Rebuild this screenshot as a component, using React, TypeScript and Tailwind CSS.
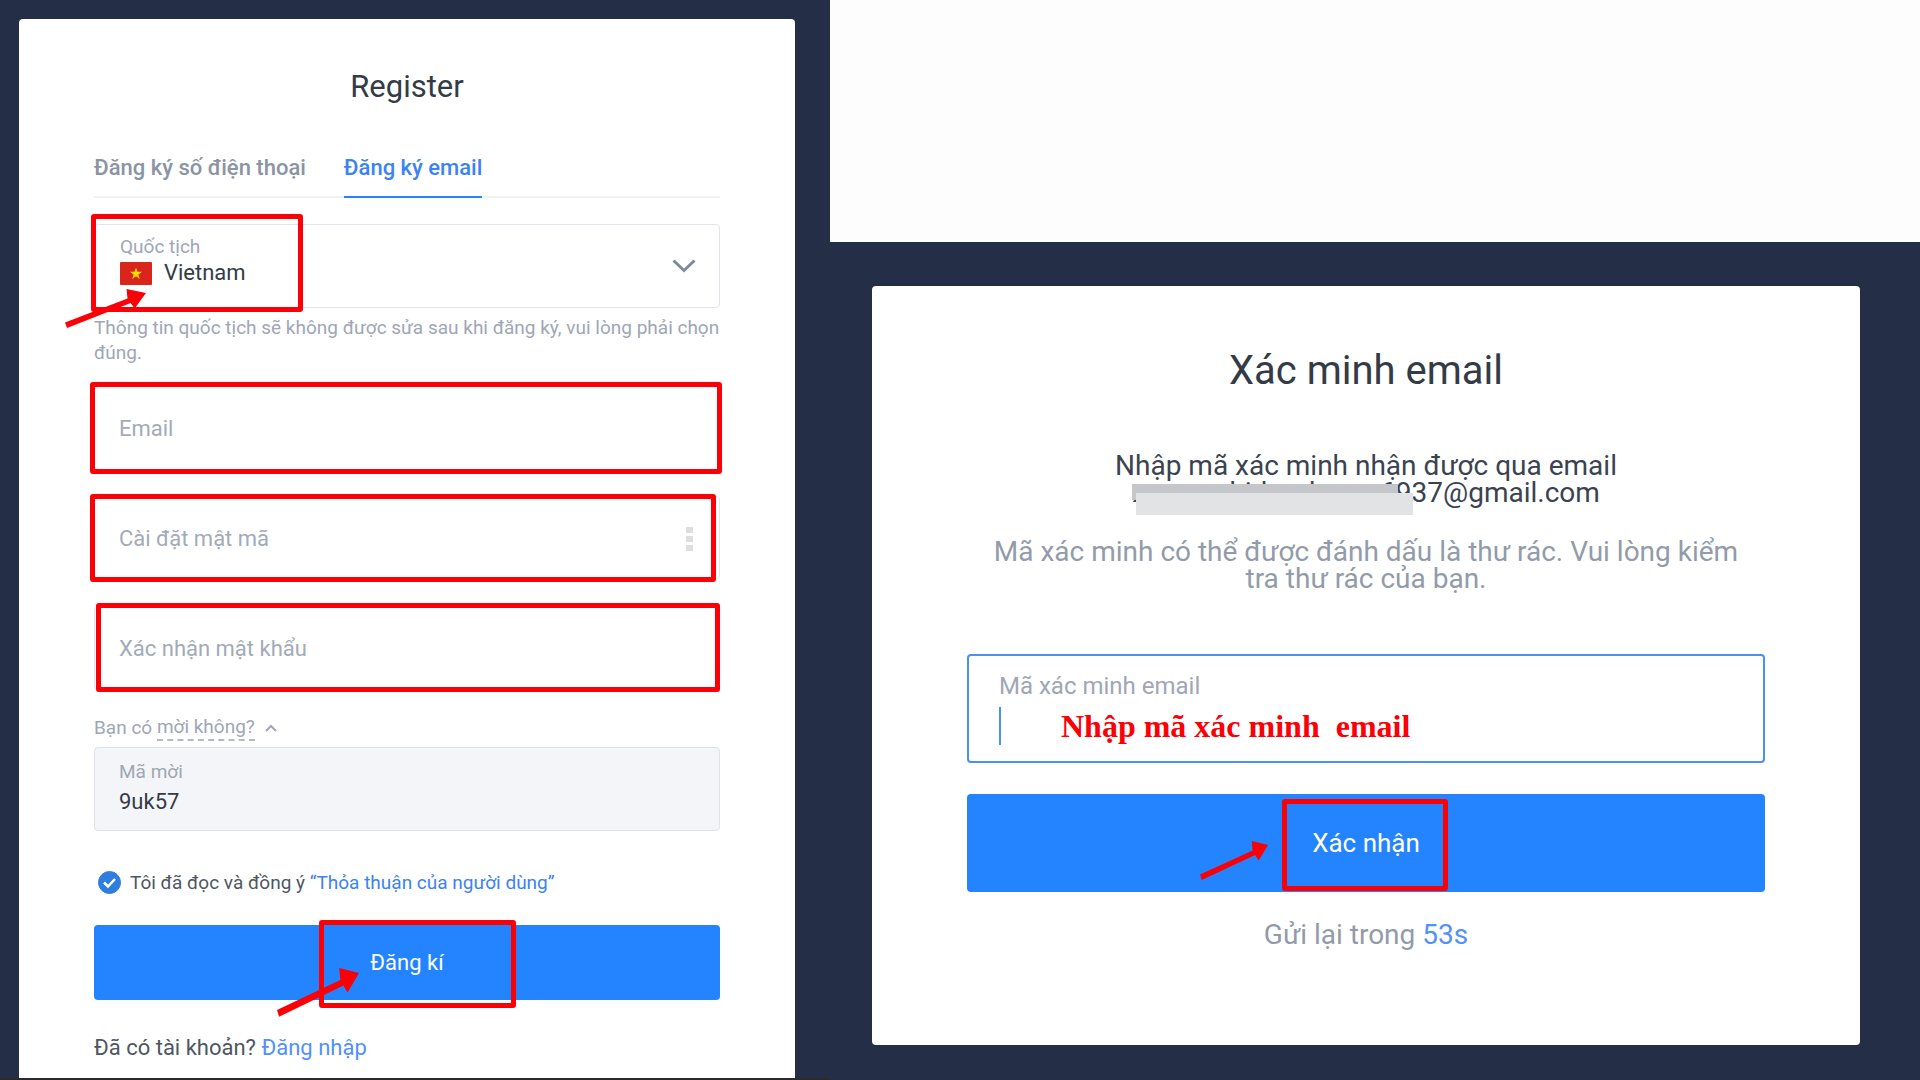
import { useState } from "react";

const noteText = "Thông tin quốc tịch sẽ không được sửa sau khi đăng ký, vui lòng phải chọn đúng.";

function Frame({ className }: { className: string }) {
    return <span aria-hidden="true" className={`pointer-events-none absolute rounded-[3px] border-5 border-[#fb0007] ${className}`} />;
}

function Arrow({ className }: { className: string }) {
    return (
        <svg aria-hidden="true" viewBox="0 0 80 40" preserveAspectRatio="none" className={`pointer-events-none absolute overflow-visible ${className}`}>
            <path d="M0 33.500 L61 9.500 L60 0 L79 4 L68 19.500 L64 14 L2 39 Z" fill="#fb0007" />
        </svg>
    );
}

function RegisterForm() {
    const [country, setCountry] = useState("Vietnam");
    const [email, setEmail] = useState("");
    const [password, setPassword] = useState("");
    const [confirm, setConfirm] = useState("");
    const [agree, setAgree] = useState(true);

    const inputStyle =
        "block h-[84px] w-full rounded border border-[#e1e4ea] bg-white px-6 text-[22px] text-[#333b47] outline-none placeholder:text-[#a3aab8]";

    return (
        <form onSubmit={(e) => e.preventDefault()} className="flex flex-1 flex-col rounded-t bg-white px-[75px] pt-12">
            <h1 className="text-center text-[31px] leading-10 text-[#333b47]">Register</h1>

            <div className="mt-[45px] flex gap-[38px] border-b-2 border-[#eff1f4] text-[22px] leading-8 font-medium">
                <button type="button" className="-mb-0.5 border-b-2 border-transparent pb-3 text-[#8a94a3]">Đăng ký số điện thoại</button>
                <button type="button" className="-mb-0.5 border-b-2 border-[#2483ff] pb-3 text-[#3b82f6]">Đăng ký email</button>
            </div>

            <div className="relative mt-[26px] flex h-[84px] items-center rounded border border-[#e1e4ea] px-[25px]">
                <div className="flex-1 pb-2.5">
                    <label htmlFor="country" className="block text-[19px] leading-6 text-[#a0a6b5]">Quốc tịch</label>
                    <div className="flex items-center">
                        <svg viewBox="0 0 32 23" className="h-[23px] w-8">
                            <rect width="32" height="23" rx="1" fill="#da251d" />
                            <path d="M16 5.500l1.500 4.300h4.500l-3.600 2.700 1.300 4.400-3.700-2.600-3.700 2.600 1.300-4.400-3.600-2.700h4.500z" fill="#ffdd00" />
                        </svg>
                        <select
                            id="country"
                            value={country}
                            onChange={(e) => setCountry(e.target.value)}
                            className="ml-3 flex-1 appearance-none bg-transparent text-[22px] leading-7 text-[#333b47] outline-none"
                        >
                            <option>Vietnam</option>
                        </select>
                    </div>
                </div>
                <svg viewBox="0 0 24 14" className="-mr-0.5 h-3.5 w-6" fill="none" stroke="#7f8b9b" strokeWidth="3">
                    <path d="M1.500 1.500l10.500 10 10.500-10" />
                </svg>
                <Frame className="-top-[11px] -left-1 h-[98px] w-[212px]" />
                <Arrow className="-bottom-[22px] -left-[30px] h-10 w-[82px]" />
            </div>
            <p className="mt-[7px] text-[19px] leading-[25px] text-[#a0a6b5]">{noteText}</p>

            <div className="relative mt-[21px]">
                <input aria-label="Email" type="email" placeholder="Email" value={email} onChange={(e) => setEmail(e.target.value)} className={inputStyle} />
                <Frame className="-top-1 -right-0.5 -bottom-1 -left-1" />
            </div>
            <div className="relative mt-[26px]">
                <input aria-label="Cài đặt mật mã" type="password" placeholder="Cài đặt mật mã" value={password} onChange={(e) => setPassword(e.target.value)} className={inputStyle} />
                <span className="absolute top-[31px] right-[27px] flex flex-col gap-[3px]">
                    <i className="h-1.5 w-[7px] bg-[#dedede]" />
                    <i className="h-1.5 w-[7px] bg-[#dedede]" />
                    <i className="h-1.5 w-[7px] bg-[#dedede]" />
                </span>
                <Frame className="-top-0.5 right-1 -bottom-0.5 -left-1" />
            </div>
            <div className="relative mt-[26px]">
                <input aria-label="Xác nhận mật khẩu" type="password" placeholder="Xác nhận mật khẩu" value={confirm} onChange={(e) => setConfirm(e.target.value)} className={inputStyle} />
                <Frame className="-top-[3px] right-0 -bottom-0.5 left-0.5" />
            </div>

            <button type="button" className="mt-[25px] flex items-center text-[19px] leading-6 text-[#a0a6b5]">
                Bạn có&nbsp;<span className="border-b-2 border-dashed border-[#b4bac6]">mời không?</span>
                <svg viewBox="0 0 12 8" className="ml-2.5 h-2 w-3" fill="none" stroke="#a0a6b5" strokeWidth="2">
                    <path d="M1 7l5-5 5 5" />
                </svg>
            </button>
            <div className="mt-1.5 flex h-[84px] flex-col rounded border border-[#dfe2e8] bg-[#f4f5f8] px-6 pt-3">
                <label htmlFor="invite" className="text-[19px] leading-6 text-[#a0a6b5]">Mã mời</label>
                <input id="invite" readOnly value="9uk57" className="mt-0.5 bg-transparent text-[22px] leading-8 text-[#333b47] outline-none" />
            </div>

            <div className="mt-10 flex items-center text-[19px] leading-6 text-[#4d5663]">
                <span className="relative ml-1 size-6">
                    <input
                        id="agree"
                        type="checkbox"
                        checked={agree}
                        onChange={(e) => setAgree(e.target.checked)}
                        className="block size-[23px] appearance-none rounded-full border border-[#2e7de0] checked:bg-[#2e7de0]"
                    />
                    {agree && (
                        <svg viewBox="0 0 23 23" className="pointer-events-none absolute top-0 left-0 size-[23px]" fill="none" stroke="white" strokeWidth="2.500">
                            <path d="M6 11.500l4 4 7-7.500" />
                        </svg>
                    )}
                </span>
                <label htmlFor="agree" className="ml-2">Tôi đã đọc và đồng ý&nbsp;</label>
                <a href="#terms" className="text-[#3b82f6]">“Thỏa thuận của người dùng”</a>
            </div>

            <div className="relative mt-[30px]">
                <button type="submit" className="block h-[75px] w-full rounded bg-[#2483ff] text-[22px] text-white">Đăng kí</button>
                <Frame className="-top-[5px] left-1/2 h-[88px] w-[197px] -translate-x-[88px]" />
                <Arrow className="-bottom-[18px] left-1/2 h-[50px] w-[83px] -translate-x-[130px]" />
            </div>
            <p className="mt-8 text-[22px] leading-8 text-[#4d5663]">
                Đã có tài khoản? <a href="#login" className="text-[#5090ff]">Đăng nhập</a>
            </p>
        </form>
    );
}

function VerifyEmail() {
    return (
        <form onSubmit={(e) => e.preventDefault()} className="rounded bg-white px-[95px] pt-[61px] pb-[94px] text-center">
            <h2 className="text-[40px] leading-12 text-[#333b47]">Xác minh email</h2>
            <div className="mt-[57px] text-[28px] leading-[27px] text-[#3a4350]">
                <p>Nhập mã xác minh nhận được qua email</p>
                <p className="relative mx-auto w-fit">
                    xxxxxxxhidxxxhxxxx6937@gmail.com
                    {/* hides the user part of the address */}
                    <span className="absolute top-[5px] left-0 h-4 w-[266px] bg-[#c4c6c9]" />
                    <span className="absolute top-3.5 left-1 h-[22px] w-[277px] bg-[#e2e3e4]" />
                </p>
            </div>
            <p className="mt-8 px-4 text-[28px] leading-[27px] text-[#929baa]">
                Mã xác minh có thể được đánh dấu là thư rác. Vui lòng kiểm tra thư rác của bạn.
            </p>

            <div className="mt-[62px] flex h-[109px] flex-col rounded border-2 border-[#4a90f2] px-[30px] pt-3.5 text-left">
                <label htmlFor="code" className="text-2xl leading-8 text-[#a0a6b5]">Mã xác minh email</label>
                <div className="flex items-center gap-[60px]">
                    <span className="h-[38px] w-0.5 bg-[#4a90f2]" />
                    <input
                        id="code"
                        placeholder="Nhập mã xác minh  email"
                        className="min-w-0 flex-1 bg-transparent font-['Liberation_Serif',serif] text-[32px] leading-12 font-bold whitespace-pre outline-none placeholder:text-[#fb0007]"
                    />
                </div>
            </div>

            <div className="relative mt-[31px]">
                <button type="submit" className="block h-[98px] w-full rounded bg-[#2483ff] text-[26px] text-white">Xác nhận</button>
                <Frame className="top-[5px] left-1/2 h-[92px] w-[166px] -translate-x-[84px]" />
                <Arrow className="bottom-[11px] left-1/2 h-10 w-[69px] -translate-x-[166px]" />
            </div>
            <p className="mt-[27px] text-[28px] leading-8 text-[#929baa]">
                Gửi lại trong <span className="text-[#5090ff]">53s</span>
            </p>
        </form>
    );
}

export default function App() {
    return (
        <main className="grid min-h-screen grid-cols-[83fr_109fr] bg-[#252e47] font-[Roboto,sans-serif]">
            <section className="flex flex-col border-b-2 border-[#2b2b2b] pt-[19px] pr-[35px] pl-[19px]">
                <RegisterForm />
            </section>
            <section>
                <div className="h-[242px] bg-[#fdfdfd]" />
                <div className="pt-11 pr-[60px] pl-[42px]">
                    <VerifyEmail />
                </div>
            </section>
        </main>
    );
}
